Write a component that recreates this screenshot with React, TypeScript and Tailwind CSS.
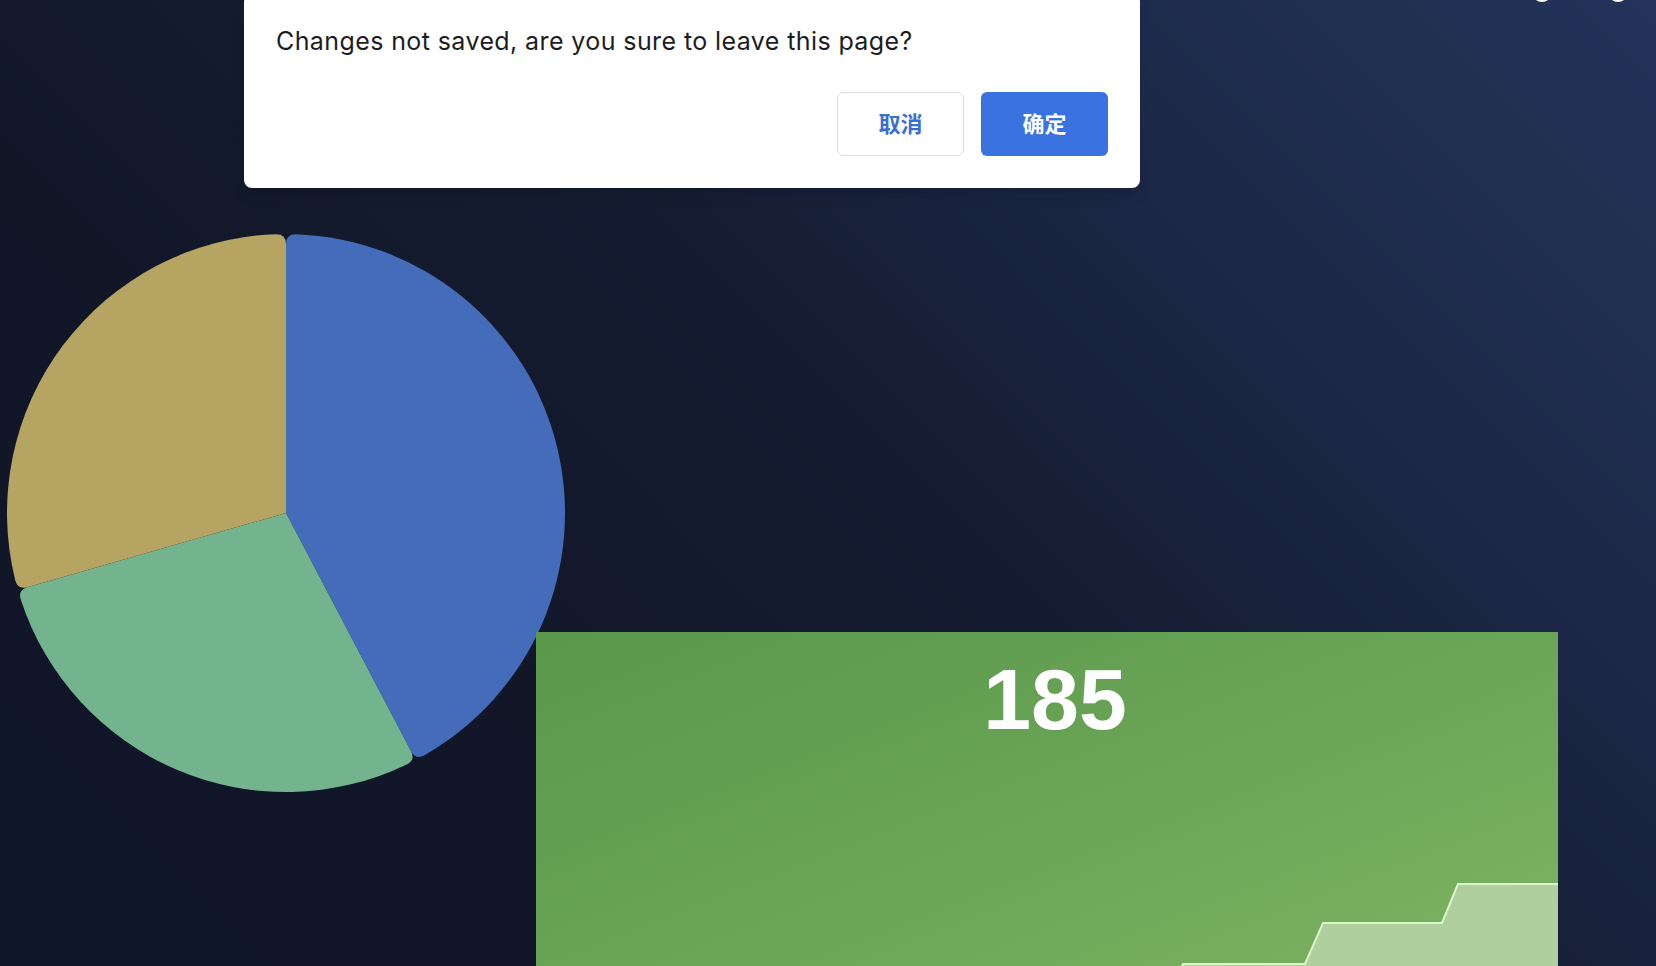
import React from 'react';

type Slice = { from: number; to: number; color: string };

const CX = 286;
const CY = 513;
const R = 279;
const CORNER = 10;

// degrees clockwise from 12 o'clock
const slices: Slice[] = [
  { from: 0, to: 152.3, color: '#456cba' },
  { from: 152.3, to: 254, color: '#73b48e' },
  { from: 254, to: 360, color: '#b5a462' },
];

function pt(deg: number, rad: number) {
  const a = (deg * Math.PI) / 180;
  return `${(CX + rad * Math.sin(a)).toFixed(2)} ${(CY - rad * Math.cos(a)).toFixed(2)}`;
}

function slicePath(s: Slice) {
  const d = (CORNER / R) * (180 / Math.PI);
  const large = s.to - s.from - 2 * d > 180 ? 1 : 0;
  return [
    `M ${CX} ${CY}`,
    `L ${pt(s.from, R - CORNER)}`,
    `Q ${pt(s.from, R)} ${pt(s.from + d, R)}`,
    `A ${R} ${R} 0 ${large} 1 ${pt(s.to - d, R)}`,
    `Q ${pt(s.to, R)} ${pt(s.to, R - CORNER)}`,
    'Z',
  ].join(' ');
}

// step series, coords relative to the card
const steps = [
  [640, 346],
  [647, 332],
  [769, 332],
  [787, 291],
  [906, 291],
  [922, 252],
  [1024, 252],
];

function PieChart() {
  return (
    <svg width={536} height={800} viewBox="0 0 536 800" className="shrink-0 overflow-visible">
      {slices.map((s) => (
        <path key={s.color} d={slicePath(s)} fill={s.color} />
      ))}
    </svg>
  );
}

function StatCard() {
  const line = steps.map(([x, y], i) => `${i ? 'L' : 'M'} ${x} ${y}`).join(' ');
  return (
    <div className="relative mt-[632px] h-[400px] w-[1022px] shrink-0 overflow-hidden bg-linear-to-br from-[#5a984c] via-[#6ba557] to-[#82b765]">
      <div className="pt-[24px] pl-[16px] text-center font-['Liberation_Sans',Arial,sans-serif] text-[86px] leading-none font-bold text-white">
        185
      </div>
      <svg width={1022} height={400} viewBox="0 0 1022 400" className="absolute top-0 left-0">
        <path d={`${line} L 1024 400 L 640 400 Z`} fill="#afcf9f" />
        <path d={line} fill="none" stroke="#dcf7ca" strokeWidth={2} />
      </svg>
    </div>
  );
}

function LeaveDialog() {
  return (
    <div className="absolute top-[-6px] left-[244px] w-[896px] rounded-lg bg-white p-8 font-['Inter','Noto_Sans_CJK_SC',sans-serif] shadow-lg">
      <p className="text-[25px] leading-[30px] tracking-[0.4px] text-[#1d1d1f]">
        Changes not saved, are you sure to leave this page?
      </p>
      <div className="mt-[36px] flex justify-end gap-[17px]">
        <button className="h-[64px] w-[127px] rounded-md border border-[#dcdfe6] bg-white text-[22px] font-bold text-[#3a6ed0]">
          取消
        </button>
        <button className="h-[64px] w-[127px] rounded-md bg-[#3a72df] text-[22px] font-bold text-white">
          确定
        </button>
      </div>
    </div>
  );
}

export default function App() {
  return (
    <div className="relative h-[966px] w-full overflow-hidden bg-[linear-gradient(225deg,#24335a_0%,#1d2a4a_22%,#151d33_45%,#111727_70%,#10162a_100%)]">
      {/* header icons, mostly scrolled off the top */}
      <div className="absolute top-[-18px] left-[1532px] flex gap-[56px]">
        <span className="h-[20px] w-[20px] rounded-full border-2 border-white" />
        <span className="h-[20px] w-[20px] rounded-full border-2 border-white" />
      </div>

      <div className="flex items-start">
        <PieChart />
        <StatCard />
      </div>

      <LeaveDialog />
    </div>
  );
}
